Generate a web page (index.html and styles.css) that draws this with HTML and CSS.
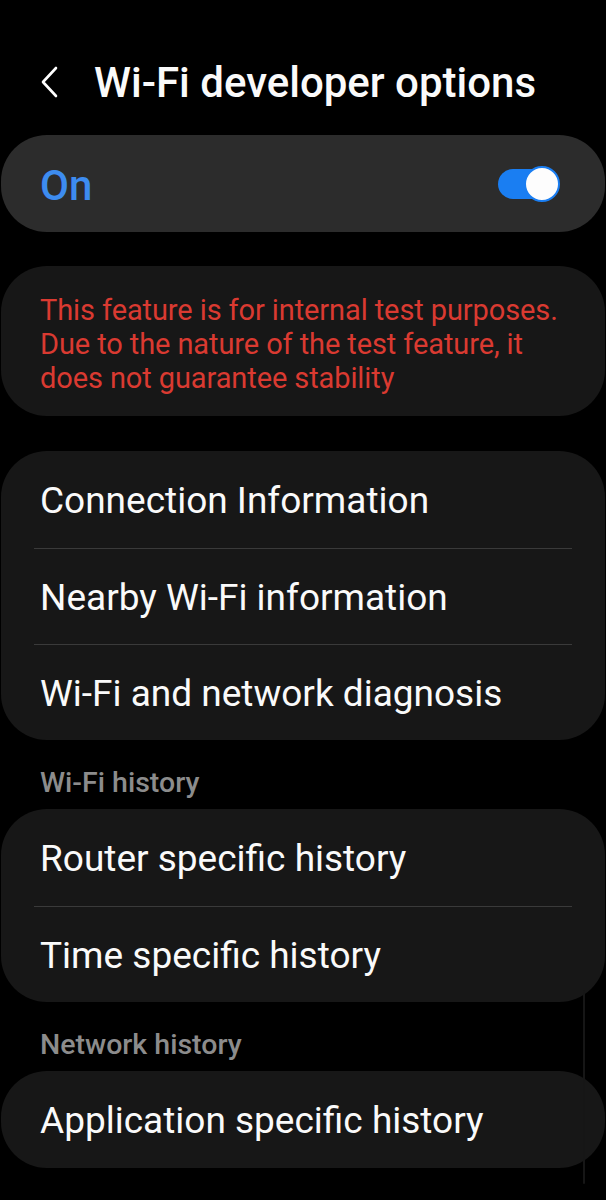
FILE: index.html
```html
<!DOCTYPE html>
<html>
<head>
<meta charset="utf-8">
<link rel="stylesheet" href="styles.css">
</head>
<body>
<div class="screen">
  <header class="topbar">
    <svg class="back" width="20" height="32" viewBox="0 0 20 32"><path d="M16 2 L3 16 L16 30" fill="none" stroke="#ffffff" stroke-width="2.6" stroke-linecap="round" stroke-linejoin="round"/></svg>
    <h1 class="title">Wi-Fi developer options</h1>
  </header>

  <section class="card card-switch">
    <span class="on-label">On</span>
    <span class="toggle"><span class="knob"></span></span>
  </section>

  <section class="card card-warn">
    <p class="warn">This feature is for internal test purposes. Due to the nature of the test feature, it does not guarantee stability</p>
  </section>

  <section class="card list">
    <div class="row">Connection Information</div>
    <div class="row">Nearby Wi-Fi information</div>
    <div class="row">Wi-Fi and network diagnosis</div>
  </section>

  <h2 class="section">Wi-Fi history</h2>
  <section class="card list">
    <div class="row">Router specific history</div>
    <div class="row">Time specific history</div>
  </section>

  <h2 class="section">Network history</h2>
  <section class="card list">
    <div class="row">Application specific history</div>
  </section>

  <div class="scrollbar"></div>
</div>
</body>
</html>
```

FILE: styles.css
```css
html, body {
  margin: 0;
  padding: 0;
  background: #000;
}
.screen {
  position: relative;
  width: 606px;
  height: 1200px;
  overflow: hidden;
  font-family: Roboto, "Noto Sans", sans-serif;
  color: #fafafa;
}
.topbar {
  display: flex;
  align-items: center;
  height: 64px;
  padding: 50px 0 0 40px;
  margin-bottom: 21px;
  gap: 34px;
}
.back { display: block; }
.title {
  margin: 0;
  font-size: 42px;
  font-weight: 500;
  letter-spacing: 0;
  color: #fafafa;
}
.card {
  margin: 0 1px;
  border-radius: 46px;
  background: #171717;
}
.card-switch {
  display: flex;
  align-items: center;
  justify-content: space-between;
  height: 97px;
  background: #2c2c2c;
  padding: 0 47px 0 39px;
}
.on-label {
  font-size: 42px;
  font-weight: 500;
  color: #3d8cf0;
  margin-top: 3px;
}
.toggle {
  position: relative;
  width: 60px;
  height: 30px;
  border-radius: 15px;
  background: #1a7ef2;
}
.knob {
  position: absolute;
  right: -2px;
  top: -3px;
  width: 32px;
  height: 32px;
  border-radius: 50%;
  background: #fdfdfd;
  border: 2px solid #1a7ef2;
}
.card-warn {
  margin-top: 34px;
  height: 150px;
  box-sizing: border-box;
  padding: 27px 30px 0 39px;
}
.warn {
  margin: 0;
  font-size: 29px;
  line-height: 34px;
  color: #da3a31;
  letter-spacing: -0.1px;
}
.list {
  margin-top: 35px;
  padding: 0 33px;
}
.row {
  box-sizing: border-box;
  height: 96px;
  display: flex;
  align-items: center;
  padding: 2px 0 0 6px;
  font-size: 37px;
  color: #fafafa;
  border-top: 1px solid #3a3a3a;
}
.row:first-child {
  border-top: none;
  height: 97px;
}
.section {
  margin: 0;
  height: 69px;
  box-sizing: border-box;
  padding: 26px 0 0 40px;
  font-size: 28.5px;
  font-weight: 500;
  color: #8c8c8c;
}
.section + .list { margin-top: 0; }
.scrollbar {
  position: absolute;
  left: 583px;
  top: 990px;
  width: 2px;
  height: 194px;
  border-radius: 1px;
  background: #161616;
}
```
